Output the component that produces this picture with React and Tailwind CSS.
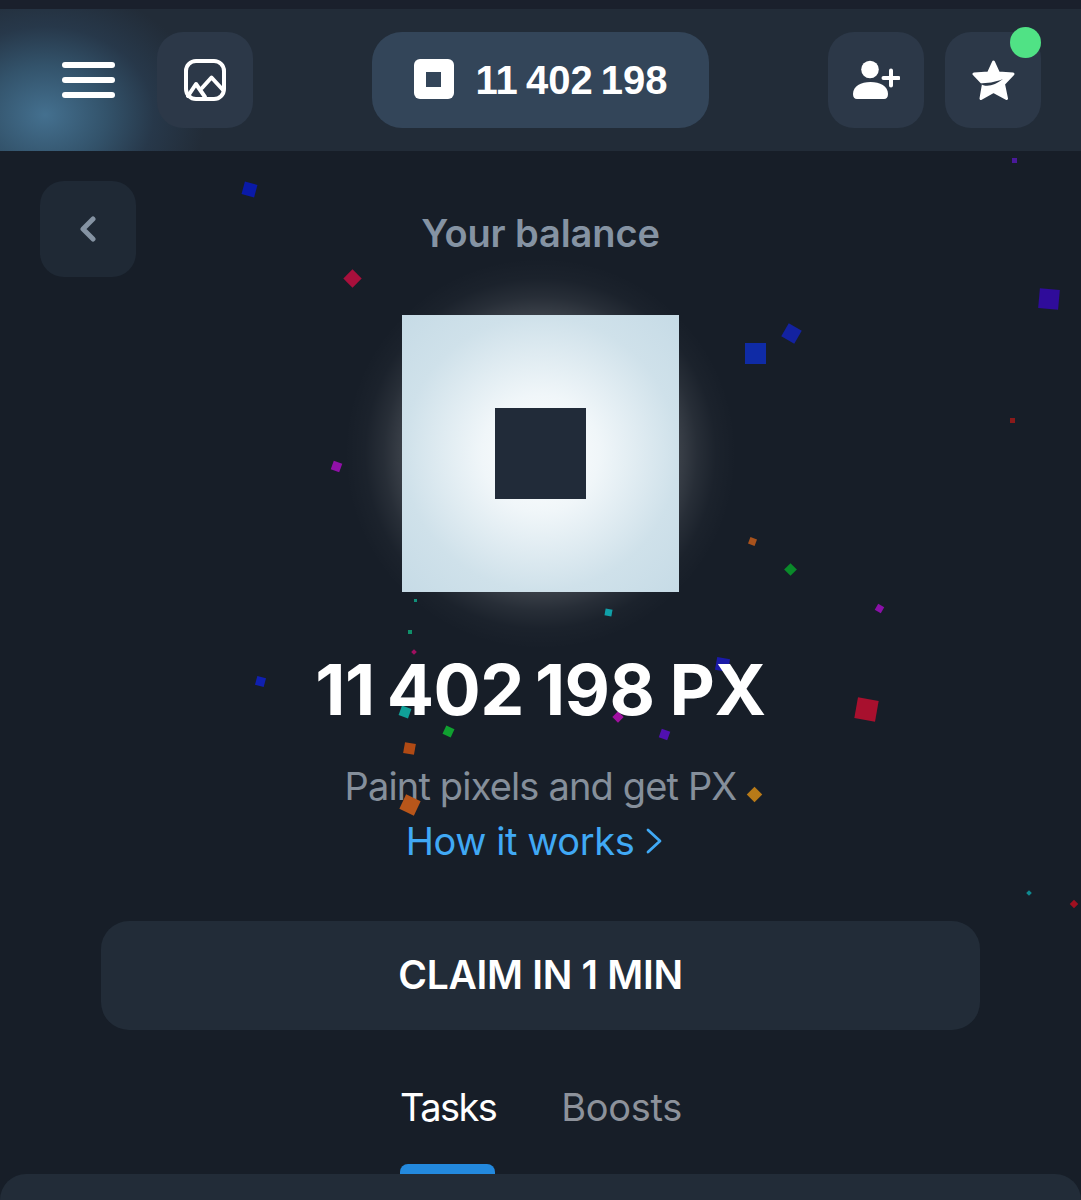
const sans = { fontFamily: '"Inter", "Noto Sans", sans-serif' };

// falling confetti: centre x, centre y, size, rotation, colour
const confetti = [
  [249, 189, 13, 15, '#0a1aa8'],
  [352, 278, 13, 45, '#a8103c'],
  [1014, 160, 5, 0, '#4a1a9a'],
  [1049, 299, 20, 5, '#2f0c9a'],
  [791, 333, 15, 30, '#1322a0'],
  [755, 353, 21, 0, '#0f2ba6'],
  [1012, 420, 5, 0, '#8a1a1a'],
  [336, 466, 9, 20, '#9010a8'],
  [752, 541, 7, 20, '#a8521c'],
  [790, 569, 9, 45, '#0a8a2a'],
  [879, 608, 7, 30, '#8a10a8'],
  [608, 612, 7, 10, '#10a0a8'],
  [415, 600, 3, 0, '#10907a'],
  [410, 632, 4, 0, '#10906a'],
  [414, 652, 4, 45, '#a01060'],
  [260, 681, 9, 15, '#1020b0'],
  [722, 664, 13, 10, '#1a1aa8'],
  [866, 709, 21, 10, '#a8102e'],
  [405, 712, 10, 20, '#10a098'],
  [618, 717, 8, 45, '#a010a0'],
  [664, 734, 9, 20, '#5010b0'],
  [448, 731, 9, 25, '#10a030'],
  [409, 748, 11, 10, '#b04a14'],
  [410, 805, 16, 25, '#b8561a'],
  [754, 794, 11, 45, '#b87a18'],
  [1029, 893, 4, 45, '#108a90'],
  [1074, 904, 6, 45, '#a01020'],
];

const ImageIcon = () => (
  <svg width="42" height="42" viewBox="0 0 42 42" fill="none" stroke="white" strokeWidth="4" strokeLinecap="round" strokeLinejoin="round">
    <rect x="2" y="2" width="38" height="38" rx="10" />
    <path d="M4 37 L12 25 L21 38" />
    <path d="M18 29 L27.500 18.500 L39 31" />
  </svg>
);

const UserPlusIcon = () => (
  <svg width="47" height="40" viewBox="0 0 47 40" fill="white">
    <circle cx="17" cy="9.500" r="8.800" />
    <path d="M0 34 C0 26 8 22 17.500 22 C27 22 35 26 35 34 C35 37.500 33.500 39 31 39 L4 39 C1.500 39 0 37.500 0 34 Z" />
    <path d="M38 10.500 V25.500 M30.500 18 H45.500" stroke="white" strokeWidth="4" strokeLinecap="round" fill="none" />
  </svg>
);

const StarIcon = () => (
  <svg width="43" height="41" viewBox="0 0 43 41">
    <path
      fill="white"
      stroke="white"
      strokeWidth="3"
      strokeLinejoin="round"
      d="M21.500 2 L26.500 13 L41 14 L31.500 24 L34.500 38.500 L21.500 31.500 L9 38.500 L11.500 24 L2 14 L16.500 13 Z"
    />
    <path fill="#2c3848" d="M8 23.500 C14 28 23 25.500 31 19 C23 22.500 15 23 8 23.500 Z" />
  </svg>
);

const IconButton = ({ children, className = 'bg-[#2c3848]' }) => (
  <div className={`w-24 h-24 rounded-[26px] flex items-center justify-center ${className}`}>{children}</div>
);

const Header = () => (
  <header className="relative h-[142px] bg-[#222c38] overflow-hidden flex items-center justify-between px-10">
    <div className="absolute left-[-115px] top-[-24px] w-[320px] h-[260px] bg-[radial-gradient(closest-side,#44708f_0%,#33536b_38%,#27384a_68%,rgba(34,44,56,0)_100%)]" />
    <div className="relative flex gap-[21px]">
      <IconButton className="bg-transparent">
        <div className="flex flex-col gap-[9px]">
          <span className="block w-[53px] h-[6px] rounded-full bg-white" />
          <span className="block w-[53px] h-[6px] rounded-full bg-white" />
          <span className="block w-[53px] h-[6px] rounded-full bg-white" />
        </div>
      </IconButton>
      <IconButton>
        <ImageIcon />
      </IconButton>
    </div>
    <div className="relative w-[337px] h-24 rounded-[30px] bg-[#334559] flex items-center justify-center gap-[22px]">
      <div className="w-10 h-10 -mt-[2px] rounded-[6px] bg-white flex items-center justify-center">
        <div className="w-[15px] h-[15px] bg-[#334559]" />
      </div>
      <span className="text-white font-bold text-[40px] [word-spacing:-3px]" style={{ fontFamily: '"Liberation Sans", sans-serif' }}>
        11 402 198
      </span>
    </div>
    <div className="relative flex gap-[21px]">
      <IconButton>
        <UserPlusIcon />
      </IconButton>
      <div className="relative">
        <IconButton>
          <StarIcon />
        </IconButton>
        <span className="absolute right-0 top-[-5px] w-[31px] h-[31px] rounded-full bg-[#50e285]" />
      </div>
    </div>
  </header>
);

export default function App() {
  return (
    <div className="relative w-[1081px] h-[1200px] overflow-hidden bg-[#171e28]" style={sans}>
      <div className="h-[9px] bg-[#1a202c]" />
      <Header />

      {/* confetti passes behind the amount but over everything else */}
      <div className="absolute inset-0 z-[5] pointer-events-none">
        {confetti.map(([x, y, size, rot, color], i) => (
          <span
            key={i}
            className="absolute block"
            style={{
              left: x - size / 2,
              top: y - size / 2,
              width: size,
              height: size,
              background: color,
              transform: `rotate(${rot}deg)`,
            }}
          />
        ))}
      </div>

      <div className="grid grid-cols-[96px_1fr_96px] px-10 mt-[30px]">
        <div className="w-24 h-24 rounded-[24px] bg-[#1f2935] flex items-center justify-center">
          <svg width="18" height="26" viewBox="0 0 18 26" fill="none" stroke="#8593a3" strokeWidth="5" strokeLinecap="round" strokeLinejoin="round">
            <path d="M14 3 L4 13 L14 23" />
          </svg>
        </div>
        <h1 className="pt-[29px] text-center text-[38px] leading-[46px] font-semibold tracking-[-0.1px] text-[#8593a3]">Your balance</h1>
        <div />
      </div>

      <div className="relative w-[277px] h-[277px] mx-auto mt-[38px]">
        {/* soft halo that shows around the coin */}
        <div className="absolute left-[-92px] top-[-92px] w-[461px] h-[461px] rounded-full bg-[radial-gradient(closest-side,rgba(255,255,255,0.2)_50%,rgba(255,255,255,0.15)_60%,rgba(255,255,255,0.07)_68%,rgba(255,255,255,0.02)_76%,rgba(255,255,255,0)_85%)]" />
        <div className="relative w-full h-full bg-[radial-gradient(circle_at_center,#ffffff_0%,#f0f6f9_30%,#cfe1ea_70%,#c6dbe6_100%)] flex items-center justify-center">
          <div className="w-[91px] h-[91px] bg-[#212b39]" />
        </div>
      </div>

      <div className="relative z-10 mt-[52px] flex justify-center text-white font-bold text-[70px] leading-[92px] tracking-[-0.5px]">
        <span>11</span>
        <span className="ml-[12px]">402</span>
        <span className="ml-[11px]">198</span>
        <span className="ml-[15px]">PX</span>
      </div>

      <p className="mt-[28px] text-center text-[38px] leading-[44px] tracking-[-0.85px] text-[#858f9b]">Paint pixels and get PX</p>
      <div className="mt-[11px] pr-[13px] flex items-center justify-center gap-[12px] text-[38px] leading-[44px] tracking-[-0.4px] text-[#40a9f5]">
        <span>How it works</span>
        <svg width="16" height="26" viewBox="0 0 16 26" fill="none" stroke="#40a9f5" strokeWidth="2.800" strokeLinecap="round" strokeLinejoin="round">
          <path d="M2 2 L14 13 L2 24" />
        </svg>
      </div>

      <button className="block mx-auto mt-[58px] w-[879px] h-[109px] rounded-[28px] bg-[#222c38] text-white text-[39px] font-semibold tracking-[-0.3px]">
        CLAIM IN 1 MIN
      </button>

      <div className="mt-[54px] flex justify-center gap-[65px] text-[38px] leading-[46px] pl-[1px]">
        <span className="text-white tracking-[-1.6px]">Tasks</span>
        <span className="text-[#8d929b] tracking-[-0.3px]">Boosts</span>
      </div>

      <div className="absolute left-[400px] top-[1164px] w-[95px] h-[12px] rounded-t-[8px] bg-[#2389de]" />
      <div className="absolute left-0 right-0 top-[1174px] h-[26px] rounded-t-[28px] bg-[#222c38]" />
    </div>
  );
}
